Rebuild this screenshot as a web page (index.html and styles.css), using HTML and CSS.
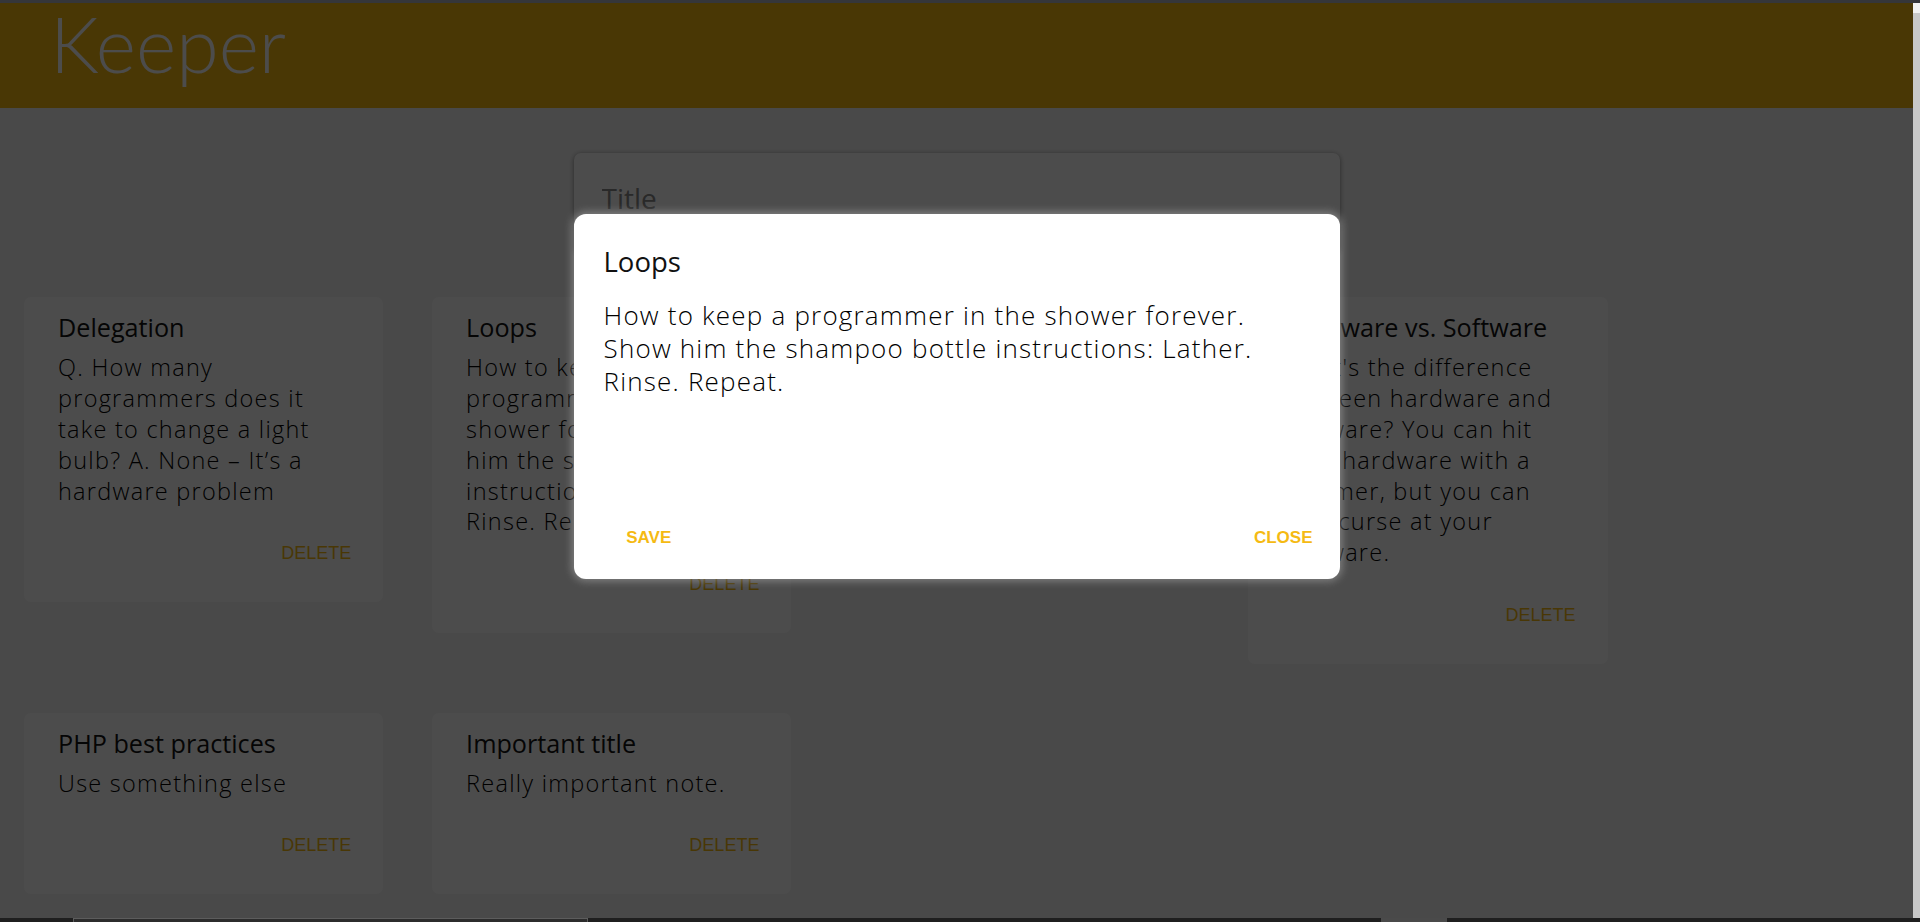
FILE: index.html
```html
<!DOCTYPE html>
<html lang="en">
<head>
<meta charset="utf-8">
<title>Keeper</title>
<link rel="stylesheet" href="styles.css">
</head>
<body>
<div class="chrome-top"></div>
<div class="viewport">
  <div class="app">
    <header class="header">
      <h1 class="logo">Keeper</h1>
    </header>
    <main class="main">
      <form class="create-note">
        <input class="create-title" type="text" placeholder="Title">
        <textarea class="create-content" rows="2" placeholder="Take a note..."></textarea>
      </form>
      <section class="notes">
        <article class="note">
          <h2 class="note-title">Delegation</h2>
          <p class="note-text">Q. How many<br>programmers does it<br>take to change a light<br>bulb? A. None – It’s a<br>hardware problem</p>
          <div class="note-actions"><button class="btn-delete" type="button">Delete</button></div>
        </article>
        <article class="note">
          <h2 class="note-title">Loops</h2>
          <p class="note-text">How to keep a<br>programmer in the<br>shower forever. Show<br>him the shampoo bottle<br>instructions: Lather.<br>Rinse. Repeat.</p>
          <div class="note-actions"><button class="btn-delete" type="button">Delete</button></div>
        </article>
        <article class="note">
          <h2 class="note-title">Bugs</h2>
          <p class="note-text">It works on my<br>machine. Then we'll<br>ship your machine.</p>
          <div class="note-actions"><button class="btn-delete" type="button">Delete</button></div>
        </article>
        <article class="note">
          <h2 class="note-title">Hardware vs. Software</h2>
          <p class="note-text">What's the difference<br>between hardware and<br>software? You can hit<br>your hardware with a<br>hammer, but you can<br>only curse at your<br>software.</p>
          <div class="note-actions"><button class="btn-delete" type="button">Delete</button></div>
        </article>
        <article class="note">
          <h2 class="note-title">PHP best practices</h2>
          <p class="note-text">Use something else</p>
          <div class="note-actions"><button class="btn-delete" type="button">Delete</button></div>
        </article>
        <article class="note">
          <h2 class="note-title">Important title</h2>
          <p class="note-text">Really important note.</p>
          <div class="note-actions"><button class="btn-delete" type="button">Delete</button></div>
        </article>
      </section>
    </main>
    <div class="backdrop">
      <div class="modal" role="dialog">
        <h2 class="modal-title">Loops</h2>
        <p class="modal-text">How to keep a programmer in the shower forever.<br>Show him the shampoo bottle instructions: Lather.<br>Rinse. Repeat.</p>
        <div class="modal-actions">
          <button class="btn-modal" type="button">Save</button>
          <button class="btn-modal" type="button">Close</button>
        </div>
      </div>
    </div>
  </div>
  <div class="scrollbar"><div class="scroll-thumb"></div></div>
</div>
<div class="taskbar">
  <div class="task task-wide"></div>
  <div class="task task-small"></div>
</div>
</body>
</html>
```
FILE: styles.css
```css
* { box-sizing: border-box; }

html, body {
  margin: 0;
  height: 922px;
  overflow: hidden;
}

body {
  display: flex;
  flex-direction: column;
  font-family: "Open Sans", "Noto Sans", sans-serif;
  background: #1f1f1f;
}

.chrome-top {
  height: 3px;
  background: #35363a;
  flex: none;
}

.viewport {
  flex: 1;
  display: flex;
  min-height: 0;
}

.app {
  flex: 1;
  position: relative;
  overflow: hidden;
  background: #f5f5f5;
}

.scrollbar {
  width: 7px;
  background: #f1f1f1;
  padding-top: 10px;
  display: flex;
}

.scroll-thumb {
  flex: 1;
  background: #c8c8c8;
}

.taskbar {
  height: 4px;
  flex: none;
  background: #1f1f1f;
  display: flex;
}

.task-wide {
  margin-left: 73px;
  width: 515px;
  background: #2c2c2c;
  border-top: 1px solid #5c5c5c;
  border-left: 1px solid #5c5c5c;
  border-right: 1px solid #5c5c5c;
}

.task-small {
  margin-left: 793px;
  width: 66px;
  background: #4a4a4a;
}

/* header */
.header {
  height: 105px;
  background: #f5ba13;
  padding: 0 50px;
}

.logo {
  margin: 0;
  font-family: "Lato", sans-serif;
  font-weight: 300;
  font-size: 77px;
  line-height: 80px;
  color: #fff;
}

/* main */
.main {
  padding-top: 44.7px;
}

.create-note {
  width: 766px;
  height: 100px;
  margin: 0 auto 44.6px;
  background: #fff;
  border-radius: 7px;
  box-shadow: 0 1px 5px rgb(138, 137, 137);
  padding: 25px 28px 0;
  display: flex;
  flex-direction: column;
}

.create-title,
.create-content {
  border: none;
  outline: none;
  font-family: "Open Sans", sans-serif;
  background: transparent;
  resize: none;
  padding: 0;
}

.create-title {
  font-size: 28px;
  height: 40px;
  line-height: 40px;
  color: #333;
}

.create-title::placeholder { color: #8a8a8a; }
.create-content::placeholder { color: #8a8a8a; }

.create-content {
  margin-top: 20px;
  font-size: 22px;
}

.notes {
  display: flex;
  flex-wrap: wrap;
  align-items: flex-start;
  column-gap: 48.8px;
  row-gap: 49px;
  padding-left: 24px;
}

.note {
  width: 359.3px;
  background: #fff;
  border-radius: 7px;
  padding: 15px 28px 38.6px 34px;
}

.note-title {
  margin: 0;
  font-size: 25.2px;
  line-height: 30px;
  font-weight: 400;
  color: #111;
}

.note-text {
  margin: 10.2px 0 0;
  font-size: 23.5px;
  line-height: 30.8px;
  font-weight: 300;
  letter-spacing: 1.25px;
  color: #000;
}

.note-actions {
  display: flex;
  justify-content: flex-end;
  margin-top: 36.9px;
  margin-right: 4px;
}

.btn-delete {
  border: none;
  background: none;
  padding: 0;
  font-family: "Liberation Sans", Arial, sans-serif;
  font-size: 18px;
  line-height: 20px;
  text-transform: uppercase;
  color: #f5ba13;
  cursor: pointer;
}

/* modal */
.backdrop {
  position: absolute;
  inset: 0;
  background: rgba(0, 0, 0, 0.7);
  display: flex;
  justify-content: center;
  align-items: flex-start;
  padding-top: 211px;
}

.modal {
  width: 766px;
  height: 365.3px;
  background: #fff;
  border-radius: 12px;
  box-shadow: 0 0 8px 2px rgba(200, 200, 200, 0.45);
  padding: 31.5px 27px 31.2px 30px;
  display: flex;
  flex-direction: column;
}

.modal-title {
  margin: 0;
  font-size: 27.5px;
  line-height: 32px;
  font-weight: 400;
  color: #111;
}

.modal-text {
  margin: 21px 0 0;
  font-size: 26px;
  line-height: 33px;
  font-weight: 300;
  letter-spacing: 1.2px;
  color: #000;
}

.modal-actions {
  margin-top: auto;
  display: flex;
  justify-content: space-between;
  padding-left: 22.7px;
}

.btn-modal {
  border: none;
  background: none;
  padding: 0;
  font-family: "Liberation Sans", Arial, sans-serif;
  font-weight: 700;
  font-size: 17px;
  line-height: 20px;
  text-transform: uppercase;
  color: #f5ba13;
  cursor: pointer;
}
```
